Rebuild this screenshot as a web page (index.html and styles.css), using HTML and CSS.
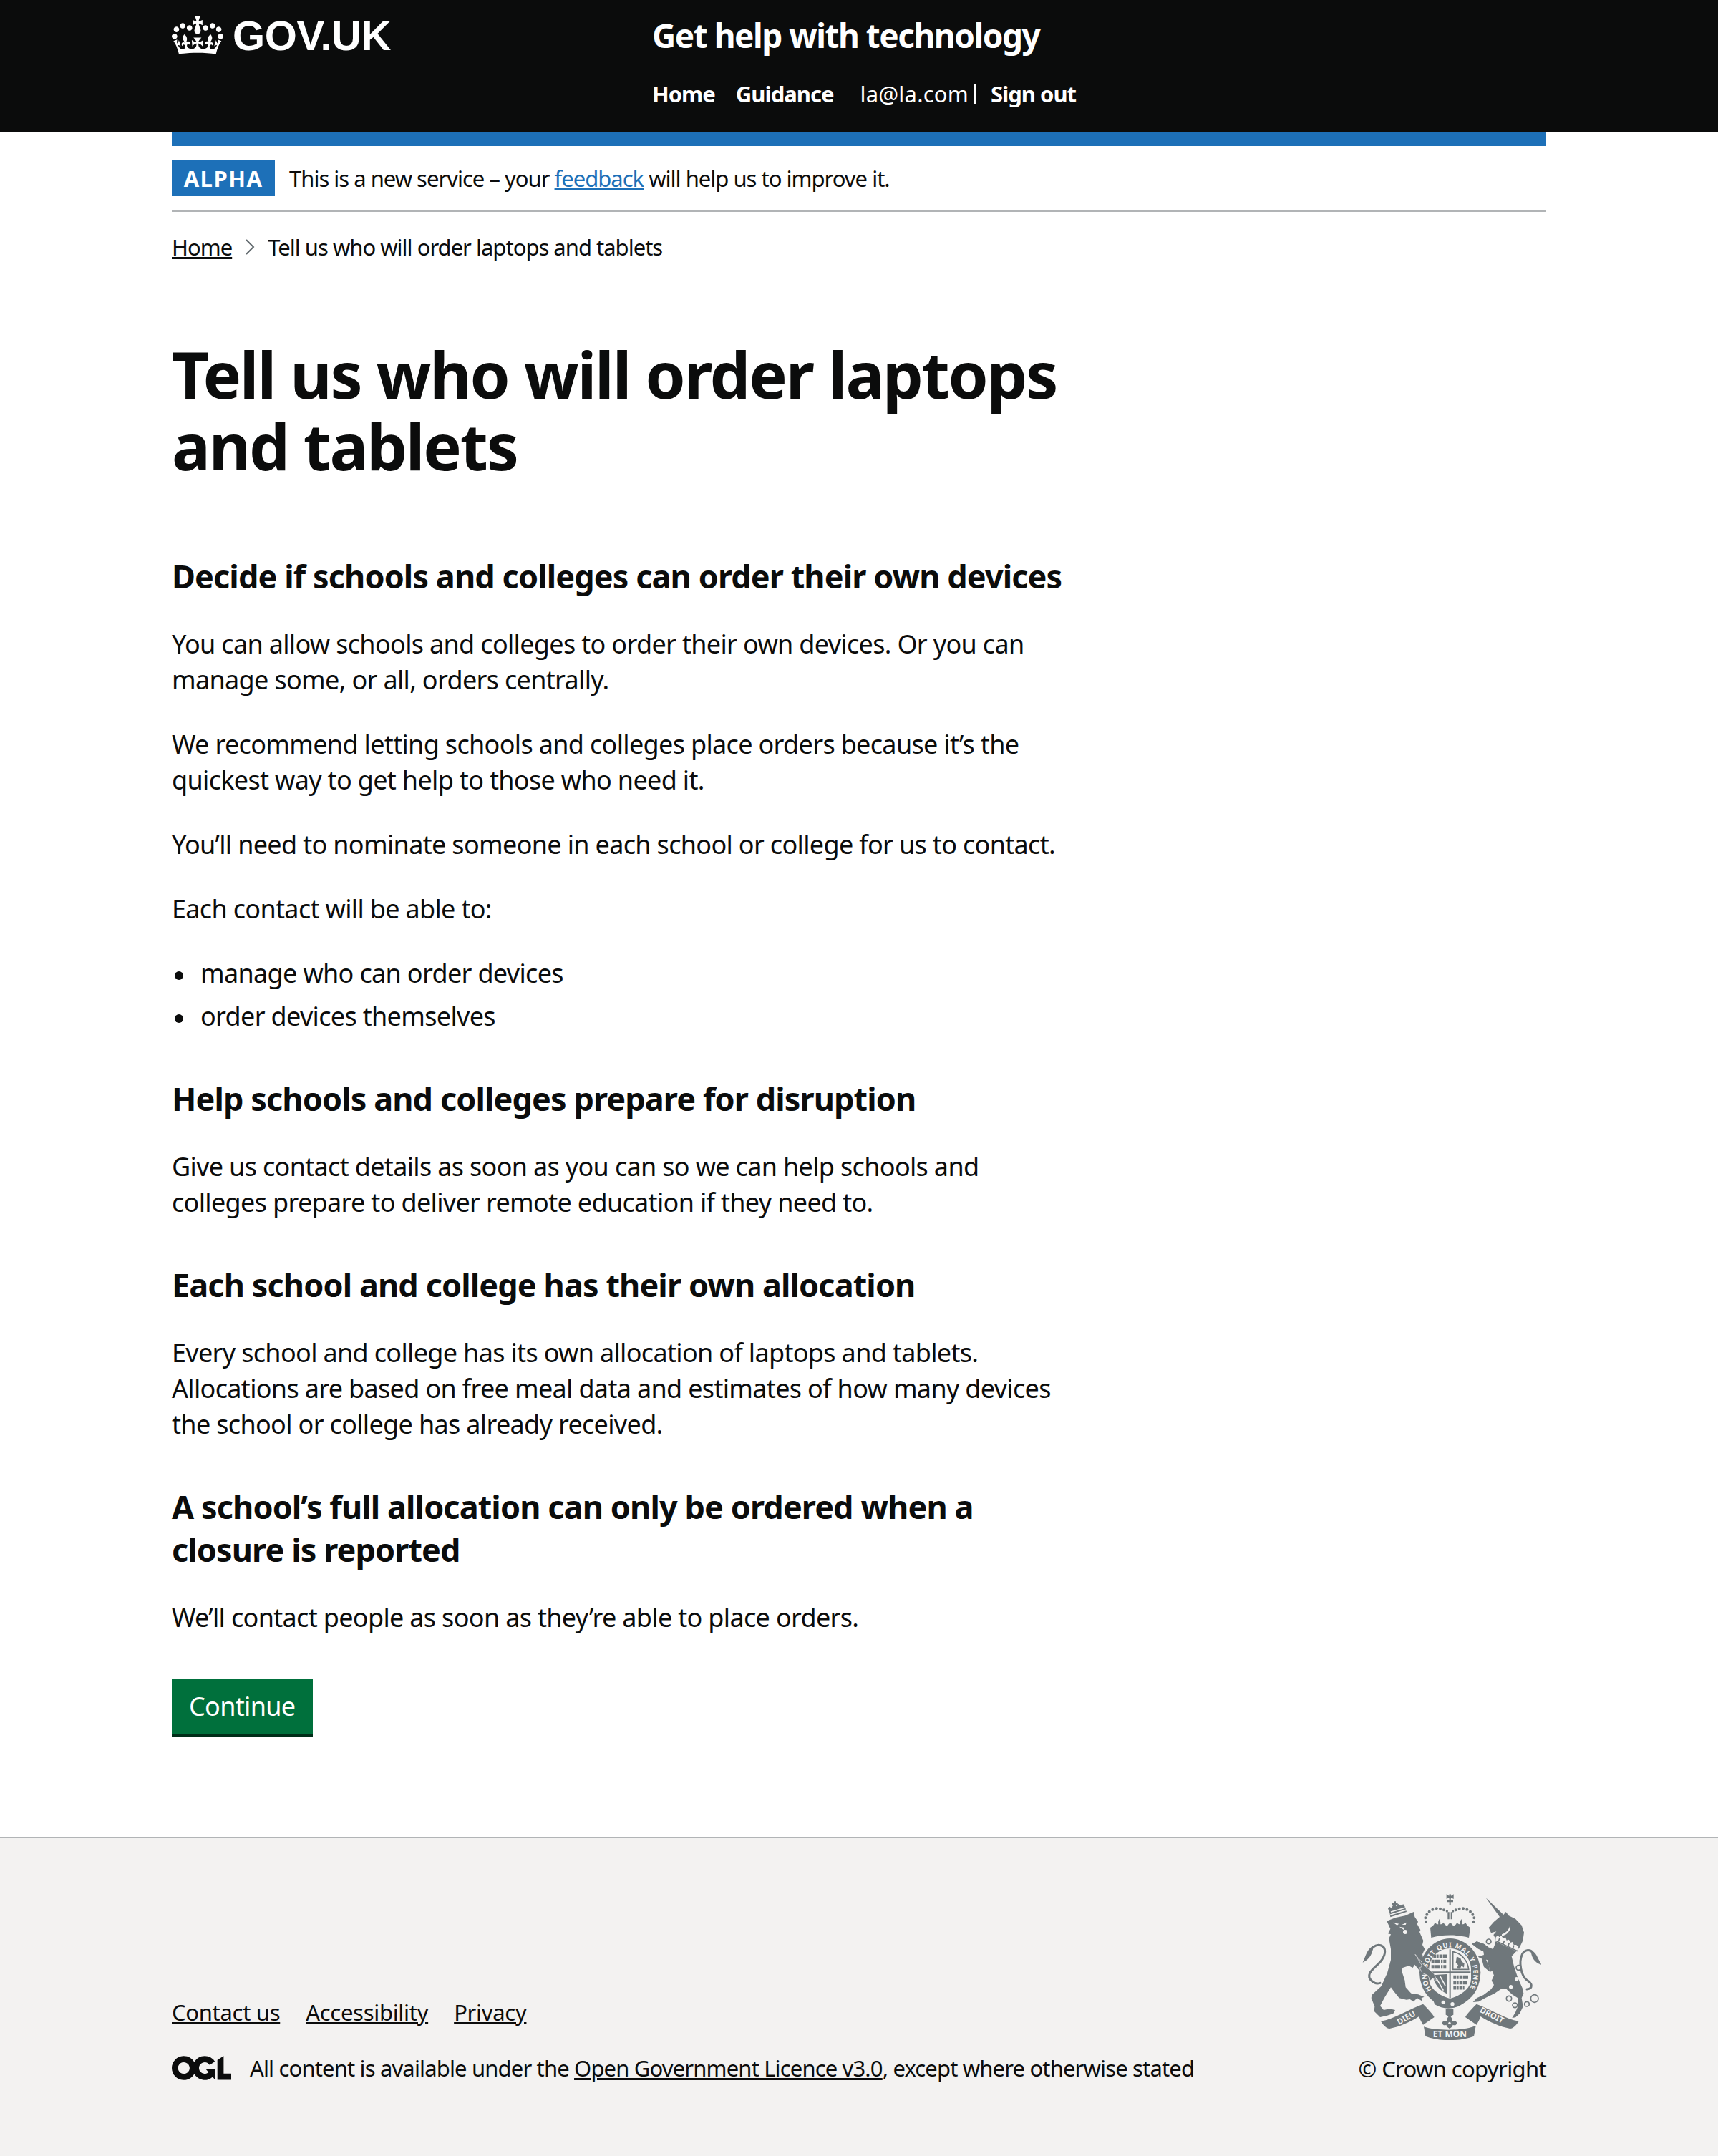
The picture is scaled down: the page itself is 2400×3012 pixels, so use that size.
FILE: index.html
```html
<!DOCTYPE html>
<html lang="en">
  <head>
    <meta charset="UTF-8" />
    <title>Tell us who will order laptops and tablets - Get help with technology</title>
    <meta name="viewport" content="width=device-width, initial-scale=1.0" />
    <link rel="stylesheet" href="styles.css">
  </head>
  <body>
    <header class="header">
      <div class="header-inner">
        <a class="logo" href="#">
          <svg class="crown" viewBox="0 0 132 97" aria-hidden="true"><path fill="currentColor" fill-rule="evenodd" d="M25 30.2c3.5 1.5 7.7-.2 9.1-3.7 1.5-3.6-.2-7.8-3.9-9.2-3.6-1.4-7.6.3-9.1 3.9-1.4 3.5.3 7.5 3.9 9zM9 39.5c3.6 1.5 7.8-.2 9.2-3.7 1.5-3.6-.2-7.8-3.9-9.1-3.6-1.5-7.6.2-9.1 3.8-1.4 3.5.3 7.5 3.8 9zM4.4 57.2c3.5 1.5 7.7-.2 9.1-3.8 1.5-3.6-.2-7.7-3.9-9.1-3.5-1.5-7.6.3-9.1 3.8-1.4 3.5.3 7.6 3.9 9.1zm38.3-21.4c3.5 1.5 7.7-.2 9.1-3.8 1.5-3.6-.2-7.7-3.9-9.1-3.6-1.5-7.6.3-9.1 3.8-1.3 3.6.4 7.7 3.9 9.1zm64.4-5.6c-3.6 1.5-7.8-.2-9.1-3.7-1.5-3.6.2-7.8 3.8-9.2 3.6-1.4 7.7.3 9.2 3.9 1.3 3.5-.4 7.5-3.9 9zm15.9 9.3c-3.6 1.5-7.7-.2-9.1-3.7-1.5-3.6.2-7.8 3.7-9.1 3.6-1.5 7.7.2 9.2 3.8 1.5 3.5-.3 7.5-3.8 9zm4.7 17.7c-3.6 1.5-7.8-.2-9.2-3.8-1.5-3.6.2-7.7 3.9-9.1 3.6-1.5 7.7.3 9.2 3.8 1.3 3.5-.4 7.6-3.9 9.1zM89.3 35.8c-3.6 1.5-7.8-.2-9.2-3.8-1.4-3.6.2-7.7 3.9-9.1 3.6-1.5 7.7.3 9.2 3.8 1.4 3.6-.3 7.7-3.9 9.1zM69.7 17.7l8.9 4.7V9.3l-8.9 2.8c-.2-.3-.5-.6-.9-.9L72.4 0H59.6l3.5 11.2c-.3.3-.6.5-.9.9l-8.8-2.8v13.1l8.8-4.7c.3.3.6.7.9.9l-5 15.4v.1c-.2.8-.4 1.6-.4 2.4 0 4.1 3.1 7.5 7 8.1h.2c.3 0 .7.1 1 .1.4 0 .7 0 1-.1h.2c4-.6 7.1-4.1 7.1-8.1 0-.8-.1-1.7-.4-2.4V34l-5.1-15.4c.4-.2.7-.6 1-.9zM66 92.8c16.9 0 32.8 1.1 47.1 3.2 4-16.9 8.9-26.7 14-33.5l-9.6-3.4c1 4.9 1.1 7.2 0 10.2-1.5-1.4-3-4.3-4.2-8.7L108.6 76c2.8-2 5-3.2 7.5-3.3-4.4 9.4-10 11.9-13.6 11.2-4.3-.8-6.3-4.6-5.6-7.9 1-4.7 5.7-5.9 8-.5 4.3-8.7-3-11.4-7.6-8.8 7.1-7.2 7.9-13.5 2.1-21.1-8 6.1-8.1 12.3-4.5 20.8-4.7-5.4-12.1-2.5-9.5 6.2 3.4-5.2 7.9-2 7.2 3.1-.6 4.3-6.4 7.8-13.5 7.2-10.3-.9-10.9-8-11.2-13.8 2.5-.5 7.1 1.8 11 7.3L80.2 60c-4.1 4.4-8 5.3-12.3 5.4 1.4-4.4 8-11.6 8-11.6H55.5s6.4 7.2 7.9 11.6c-4.2-.1-8-1-12.3-5.4l1.4 16.4c3.9-5.5 8.5-7.7 10.9-7.3-.3 5.8-.9 12.8-11.1 13.8-7.2.6-12.9-2.9-13.5-7.2-.7-5 3.8-8.3 7.1-3.1 2.7-8.7-4.6-11.6-9.4-6.2 3.7-8.5 3.6-14.7-4.6-20.8-5.8 7.6-5 13.9 2.2 21.1-4.7-2.6-11.9.1-7.7 8.8 2.3-5.5 7.1-4.2 8.1.5.7 3.3-1.3 7.1-5.7 7.9-3.5.7-9-1.8-13.5-11.2 2.5.1 4.7 1.3 7.5 3.3l-4.7-15.4c-1.2 4.4-2.7 7.2-4.3 8.7-1.1-3-.9-5.3 0-10.2l-9.5 3.4c5 6.9 9.9 16.7 14 33.5 14.8-2.1 30.8-3.2 47.7-3.2z"/></svg>
          <span class="logo-text">GOV.UK</span>
        </a>
        <div class="header-content">
          <a class="service-name" href="#">Get help with technology</a>
          <nav class="header-nav">
            <a href="#">Home</a>
            <a href="#">Guidance</a>
            <span class="user">la@la.com</span>
            <a class="sign-out" href="#">Sign out</a>
          </nav>
        </div>
      </div>
    </header>

    <div class="page">
      <div class="blue-bar"></div>
      <div class="phase-banner">
        <strong class="tag">ALPHA</strong>
        <span>This is a new service – your <a href="#">feedback</a> will help us to improve it.</span>
      </div>
      <div class="breadcrumbs">
        <a href="#">Home</a>
        <svg class="chevron" viewBox="0 0 14 24" aria-hidden="true"><path d="M2 2l10 10L2 22" fill="none" stroke="#626a6e" stroke-width="2"/></svg>
        <span>Tell us who will order laptops and tablets</span>
      </div>

      <main class="main">
        <h1>Tell us who will order laptops and tablets</h1>

        <h2>Decide if schools and colleges can order their own devices</h2>
        <p>You can allow schools and colleges to order their own devices. Or you can manage some, or all, orders centrally.</p>
        <p>We recommend letting schools and colleges place orders because it’s the quickest way to get help to those who need it.</p>
        <p>You’ll need to nominate someone in each school or college for us to contact.</p>
        <p>Each contact will be able to:</p>
        <ul>
          <li>manage who can order devices</li>
          <li>order devices themselves</li>
        </ul>

        <h2>Help schools and colleges prepare for disruption</h2>
        <p>Give us contact details as soon as you can so we can help schools and colleges prepare to deliver remote education if they need to.</p>

        <h2>Each school and college has their own allocation</h2>
        <p>Every school and college has its own allocation of laptops and tablets. Allocations are based on free meal data and estimates of how many devices the school or college has already received.</p>

        <h2>A school’s full allocation can only be ordered when a closure is reported</h2>
        <p>We’ll contact people as soon as they’re able to place orders.</p>

        <a class="button" href="#">Continue</a>
      </main>
    </div>

    <footer class="footer">
      <div class="footer-inner">
        <div class="footer-meta">
          <div class="footer-links">
            <a href="#">Contact us</a>
            <a href="#">Accessibility</a>
            <a href="#">Privacy</a>
          </div>
          <div class="licence">
            <svg class="ogl" viewBox="0 0 483.2 195.7" aria-hidden="true"><path fill="currentColor" d="M421.5 142.8V.1l-50.7 32.3v161.1h112.4v-50.7zm-122.3-9.6A47.12 47.12 0 0 1 221 97.8c0-26 21.1-47.1 47.1-47.1 16.7 0 31.4 8.7 39.7 21.8l42.7-27.2A97.63 97.63 0 0 0 268.1 0c-36.5 0-68.3 20.1-85.1 49.7A98 98 0 0 0 97.8 0C43.9 0 0 43.9 0 97.8s43.9 97.8 97.8 97.8c36.5 0 68.3-20.1 85.1-49.7a97.76 97.76 0 0 0 149.6 25.4l19.4 22.2h3v-87.8h-80l24.3 27.5zM97.8 145c-26 0-47.1-21.1-47.1-47.1s21.1-47.1 47.1-47.1 47.2 21 47.2 47S123.8 145 97.8 145"/></svg>
            <span>All content is available under the <a href="#">Open Government Licence v3.0</a>, except where otherwise stated</span>
          </div>
        </div>
        <div class="copyright">
          <svg class="crest" viewBox="130 85 750 610" aria-hidden="true">
            <g class="crest-ink">
              <!-- royal crown -->
              <path d="M483 85l11 7 1-7h6l1 7 11-7v20l-11-6-1 9h10v10h-10v12h-6v-12h-10v-10h10l-1-9-11 6z"/>
              <path d="M488 160h7v30h-7zM501 160h7v30h-7z"/>
              <path d="M415 225c10-6 16-12 20-22 4 6 8 8 14 8-2-8 0-14 4-22 4 8 6 14 4 22 6 0 10-2 14-8 4 10 8 12 16 14 4-6 8-10 12-14 4 4 8 8 12 14 8-2 12-4 16-14 4 6 8 8 14 8-2-8 0-14 4-22 4 8 6 14 4 22 6 0 10-2 14-8 4 10 10 16 20 22l-6 42c-46-14-110-14-158 0z"/>
              <circle cx="397" cy="200" r="6"/><circle cx="395" cy="184" r="6"/><circle cx="401" cy="170" r="6"/><circle cx="411" cy="158" r="6"/><circle cx="425" cy="149" r="6"/><circle cx="441" cy="145" r="6"/><circle cx="457" cy="146" r="6"/><circle cx="472" cy="151" r="6"/><circle cx="485" cy="156" r="5"/>
              <circle cx="597" cy="200" r="6"/><circle cx="599" cy="184" r="6"/><circle cx="593" cy="170" r="6"/><circle cx="583" cy="158" r="6"/><circle cx="569" cy="149" r="6"/><circle cx="553" cy="145" r="6"/><circle cx="537" cy="146" r="6"/><circle cx="522" cy="151" r="6"/><circle cx="510" cy="156" r="5"/>

              <!-- lion -->
              <g transform="translate(120 75)">
                <path d="M113 122L150 108 190 100 226 84 230 105 244 125 240 135 254 160 250 168 266 205 262 222 272 240 262 262 268 290 250 330 230 305 222 318 205 310 180 318 175 330 188 370 192 400 215 425 245 430 270 440 258 445 262 458 240 445 225 460 210 450 195 452 165 445 145 420 130 400 105 440 85 478 100 495 125 490 148 495 140 510 115 518 85 525 60 500 62 480 48 445 50 432 90 395 115 340 130 285 130 240 122 195 130 178 118 175 128 155z"/>
                <path d="M60 225C30 235 25 270 12 296 30 288 45 275 52 250z"/>
                <path d="M125 88L118 70 126 62 132 70 140 54 150 62 160 50 172 58 182 52 190 64 196 84 128 106z"/>
                <path d="M143 40h8v8h8v8h-8v10h-8V56h-8v-8h8z"/>
              </g>

              <!-- unicorn -->
              <g transform="translate(510 75)">
                <path d="M138 25L212 96 222 84 234 100 262 113 288 140 298 170 293 205 280 232 272 242 246 270 256 312 272 360 292 405 296 425 288 445 294 480 280 510 262 526 248 528 262 505 272 480 272 445 248 430 225 408 205 405 175 425 135 445 108 460 84 462 100 445 128 432 160 408 172 390 162 372 172 350 165 332 155 335 150 308 125 290 120 278 105 272 130 265 128 250 105 238 80 218 100 208 130 218 148 232 168 240 178 215 178 196 170 180 182 166 160 172 150 150 172 125 196 105z"/>
                <path d="M325 245C350 250 355 280 372 306 350 300 335 285 330 265z"/>
              </g>
            </g>

            <path class="crest-tail" transform="translate(120 75)" d="M85 382C60 390 30 365 42 340 55 315 105 290 105 250 105 222 75 215 55 232"/>
            <path class="crest-tail" transform="translate(510 75)" d="M310 408C335 405 335 385 310 370 285 350 275 295 290 262 302 240 325 240 335 255"/>

            <g class="crest-paper" transform="translate(120 75)">
              <path d="M140 128l24 6-8 6zM176 138l20-10-4 10z"/>
              <path d="M165 146l22 4-2 10z"/>
              <circle cx="190" cy="168" r="9"/>
            </g>
            <path class="crest-paper-line" transform="translate(120 75)" d="M130 84l62-18M128 96l66-20"/>
            <g class="crest-paper" transform="translate(510 75)">
              <path d="M205 178C225 170 238 155 240 135 246 160 230 178 205 186z"/>
              <path d="M180 190l8-8 7 8 8-7 7 12 10-5 5 13 10-3 5 13 10-3 5 12h10l10 8-7 20-90-42z"/>
              <circle cx="267" cy="365" r="8"/><circle cx="243" cy="398" r="8"/>
            </g>
            <path class="crest-hatch" transform="translate(510 75)" d="M182 206l88 42M196 194l-5 13M216 204l-5 13M236 214l-5 13M256 224l-5 13"/>
            <g class="crest-chain" transform="translate(510 75)">
              <circle cx="150" cy="208" r="10"/><circle cx="140" cy="292" r="10"/><circle cx="275" cy="318" r="10"/>
              <circle cx="235" cy="447" r="11"/><circle cx="260" cy="475" r="10"/><circle cx="310" cy="470" r="10"/><circle cx="342" cy="447" r="16"/>
            </g>

            <!-- garter and shield -->
            <ellipse class="crest-ink" cx="498" cy="413" rx="128" ry="143"/>
            <path id="garter" d="M420 487A98 112 0 1 1 576 487" fill="none"/>
            <path class="crest-paper" d="M410 400c0-50 40-88 88-88s88 38 88 88v40c0 40-44 70-88 82-44-12-88-42-88-82z"/>
            <path class="crest-ink" d="M495 316h6v204h-6zM412 409h172v6H412z"/>
            <g class="crest-dash">
              <path d="M428 345h58M420 367h66M420 389h66M512 433h62M512 455h58M512 477h46"/>
            </g>
            <path class="crest-hatch" d="M510 326c40 8 62 40 66 74h-66z"/>
            <path class="crest-ink" d="M526 346l16 8 6 14 10 6-2 18-10-8-6 14-14-2 6-14-10-10z"/>
            <path class="crest-ink" d="M426 424l58-4v82c-30-14-54-40-58-78z"/>
            <path class="crest-paper-line" d="M440 436l30 52M456 428l22 40"/>
            <g class="crest-text">
              <text font-size="28" textLength="462"><textPath href="#garter">HONI SOIT QUI MAL Y PENSE</textPath></text>
            </g>
            <path class="crest-ink" d="M418 505c30 32 120 46 172-8l-26 36c-34 34-88 40-130 14z"/>
            <g class="crest-paper">
              <circle cx="470" cy="538" r="8"/><circle cx="508" cy="545" r="8"/>
            </g>

            <!-- paw over the garter -->
            <path class="crest-paw" transform="translate(120 75)" d="M232 262L272 310 296 330 312 345 322 372 305 362 296 372 285 350 262 340 250 318 262 312z"/>
            <path class="crest-ink" transform="translate(510 75)" d="M80 218L100 208 130 218 148 232 150 262 128 250 105 238zM105 272L130 265 150 308 155 335 130 315 120 278z"/>

            <!-- motto scroll -->
            <path class="crest-ink" d="M208 617C262 608 320 570 385 545 400 560 425 585 432 600L385 632C378 620 372 610 368 597 330 622 285 640 245 648 228 646 218 632 208 617z"/>
            <path class="crest-ink" d="M786 617C732 608 674 570 609 545 594 560 569 585 562 600L609 632C616 620 622 610 626 597 664 622 709 640 749 648 766 646 776 632 786 617z"/>
            <path class="crest-ink" d="M388 640c52 18 166 18 218-4l-8 44c-58 22-148 22-203 0z"/>
            <g class="crest-text">
              <text font-size="34" text-anchor="middle" transform="translate(320 612) rotate(-30)">DIEU</text>
              <text font-size="36" text-anchor="middle" x="497" y="684">ET MON</text>
              <text font-size="34" text-anchor="middle" transform="translate(668 602) rotate(27)">DROIT</text>
            </g>
            <path class="crest-ink" d="M480 566h32v24l-16 8-16-8z"/>
            <path class="crest-ink" d="M496 590c8 10 14 20 10 30 8-8 16-6 20 2 2 12-10 14-16 10-2 8-8 12-14 16-6-4-12-8-14-16-6 4-18 2-16-10 4-8 12-10 20-2-4-10 2-20 10-30z"/>
            <circle class="crest-paper" cx="496" cy="625" r="5"/>
          </svg>
          <a href="#">© Crown copyright</a>
        </div>
      </div>
    </footer>
  </body>
</html>
```

FILE: styles.css
```css
body {
  font-family: "Noto Sans", Arial, sans-serif;
  font-size: 36px;
  line-height: 50px;
  color: #0b0c0c;
  margin: 0;
  background-color: #fff;
  letter-spacing: -0.67px;
  display: flex;
  flex-direction: column;
  min-height: 100vh;
}

a {
  color: inherit;
}

.header {
  background-color: #0b0c0c;
  color: #fff;
  height: 184px;
}

.header-inner {
  width: 1920px;
  margin: 0 auto;
  display: flex;
}

.logo {
  width: 671px;
  display: flex;
  align-items: flex-start;
  color: #fff;
  text-decoration: none;
  padding-top: 23px;
}

.crown {
  width: 72px;
  height: 53px;
}

.logo-text {
  font-family: "Liberation Sans", Arial, sans-serif;
  font-weight: bold;
  font-size: 58px;
  line-height: 58px;
  letter-spacing: -0.4px;
  margin-left: 13px;
  margin-top: -2px;
}

.header-content {
  display: flex;
  flex-direction: column;
}

.service-name {
  font-size: 46px;
  line-height: 60px;
  font-weight: bold;
  letter-spacing: -1.5px;
  text-decoration: none;
  color: #fff;
  margin-top: 19px;
}

.header-nav {
  display: flex;
  font-size: 31px;
  line-height: 40px;
  letter-spacing: -1px;
  margin-top: 32px;
}

.header-nav a {
  color: #fff;
  font-weight: bold;
  text-decoration: none;
  margin-right: 29px;
}

.header-nav .user {
  align-self: center;
  line-height: 28px;
  letter-spacing: 0.2px;
  margin-left: 8px;
  padding-right: 8px;
  border-right: 2px solid #fff;
  margin-right: 21px;
}

.page {
  width: 1920px;
  margin: 0 auto;
}

.blue-bar {
  height: 20px;
  background-color: #1d70b8;
}

.phase-banner {
  display: flex;
  align-items: center;
  font-size: 31px;
  line-height: 50px;
  letter-spacing: -1px;
  padding: 20px 0;
  border-bottom: 2px solid #b1b4b6;
}

.phase-banner a {
  color: #1d70b8;
}

.tag {
  background-color: #1d70b8;
  color: #fff;
  width: 144px;
  height: 50px;
  text-align: center;
  letter-spacing: 1.5px;
  margin-right: 20px;
}

.breadcrumbs {
  display: flex;
  align-items: center;
  font-size: 31px;
  line-height: 40px;
  letter-spacing: -1px;
  margin-top: 29px;
}

.chevron {
  width: 14px;
  height: 24px;
  margin: 0 18px 0 18px;
}

.main {
  width: 1260px;
  padding-top: 107px;
  padding-bottom: 144px;
}

h1 {
  font-size: 90px;
  line-height: 100px;
  font-weight: bold;
  margin: 0 0 103px;
  letter-spacing: -2.25px;
}

h2 {
  font-size: 45px;
  line-height: 60px;
  font-weight: bold;
  margin: 0 0 40px;
  letter-spacing: -0.9px;
}

p {
  margin: 0 0 40px;
}

ul {
  list-style: none;
  margin: 0 0 40px;
  padding-left: 40px;
}

li {
  margin-bottom: 10px;
}

li::before {
  content: "";
  display: inline-block;
  width: 12px;
  height: 12px;
  border-radius: 50%;
  background-color: #0b0c0c;
  margin: 0 24px 4px -36px;
}

ul + h2,
p + h2 {
  margin-top: 60px;
}

.button {
  display: inline-block;
  background-color: #00703c;
  color: #fff;
  text-decoration: none;
  padding: 13px 24px 13px;
  margin-top: 21px;
  box-shadow: 0 4px 0 #002d18;
}

.footer {
  background-color: #f3f2f1;
  border-top: 2px solid #b1b4b6;
  flex-grow: 1;
  font-size: 31px;
  line-height: 40px;
  letter-spacing: -0.85px;
}

.footer-inner {
  width: 1920px;
  margin: 0 auto;
  padding-top: 78px;
  display: flex;
  justify-content: space-between;
}

.footer-meta {
  padding-top: 145px;
}

.footer-links {
  display: flex;
  gap: 36px;
  margin-bottom: 38px;
  letter-spacing: -0.3px;
}

.licence {
  display: flex;
  align-items: center;
}

.ogl {
  width: 83px;
  height: 34px;
  color: #0b0c0c;
  margin-right: 26px;
}

.copyright {
  display: flex;
  flex-direction: column;
  align-items: flex-end;
}

.copyright a {
  text-decoration: none;
  margin-top: 20px;
  letter-spacing: -0.65px;
}

.crest {
  width: 250px;
  height: 204px;
  margin-right: 7px;
}

.crest-ink {
  fill: #6f777b;
}

.crest-paper {
  fill: #f3f2f1;
}

.crest-tail {
  fill: none;
  stroke: #6f777b;
  stroke-width: 9px;
  stroke-linecap: round;
}

.crest-chain {
  fill: #f3f2f1;
  stroke: #6f777b;
  stroke-width: 5px;
}

.crest-dash {
  fill: none;
  stroke: #6f777b;
  stroke-width: 15px;
  stroke-dasharray: 12 3 7 3;
}

.crest-hatch {
  fill: none;
  stroke: #6f777b;
  stroke-width: 5px;
}

.crest-paw {
  fill: #6f777b;
  stroke: #f3f2f1;
  stroke-width: 2px;
}

.crest-paper-line {
  fill: none;
  stroke: #f3f2f1;
  stroke-width: 5px;
}

.crest-text text {
  font-family: "Noto Sans", Arial, sans-serif;
  font-weight: bold;
  fill: #f3f2f1;
  letter-spacing: 0;
}
```
